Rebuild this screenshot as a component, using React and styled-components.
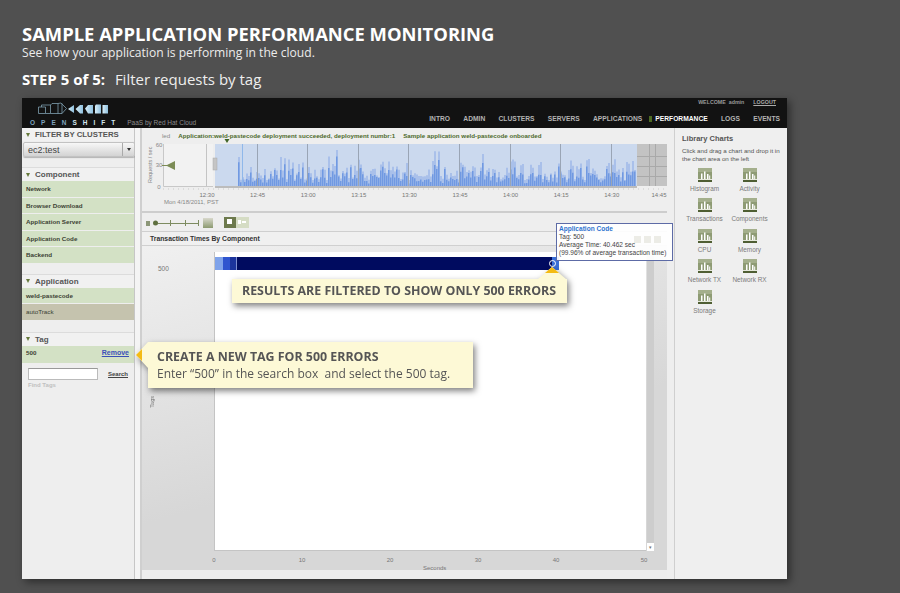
import React from 'react'
import styled, { createGlobalStyle } from 'styled-components'

const GlobalStyle = createGlobalStyle`
    html, body {
        margin:0;
        padding:0;
        background:#505050;
    }
    * {
        box-sizing:border-box;
    }
`

const Page = styled.div`
    width:900px;
    height:593px;
    overflow:hidden;
    padding:22px 0 0 22px;
    background:#505050;
    font-family:"Liberation Sans", Arial, sans-serif;
`

const Title = styled.h1`
    margin:0;
    font:700 18.4px/23px "Open Sans", sans-serif;
    color:#fff;
`

const Subtitle = styled.p`
    margin:0;
    height:17px;
    font:400 12.1px/16px "Open Sans", sans-serif;
    color:#ececec;
`

const Step = styled.h2`
    margin:7px 0 0;
    height:29px;
    font:400 15px/20px "Open Sans", sans-serif;
    color:#eee;
    b {
        font-weight:700;
        color:#fff;
        margin-right:6px;
    }
`

const Window = styled.div`
    position:relative;
    width:765px;
    height:481px;
    display:flex;
    flex-direction:column;
    background:#eee;
    box-shadow:3px 3px 8px rgba(0,0,0,0.45);
`

const TopBar = styled.header`
    height:30px;
    flex:none;
    display:flex;
    justify-content:space-between;
    background:#121212;
`

const Brand = styled.div`
    padding:4px 0 0 8px;
    display:flex;
    flex-direction:column;
    svg {
        display:block;
        margin-left:8px;
    }
`

const BrandRow = styled.div`
    display:flex;
    align-items:flex-end;
    gap:6px;
    margin-top:4px;
`

const Wordmark = styled.span`
    font-size:6.5px;
    font-weight:700;
    letter-spacing:6px;
    color:#7fa3bd;
    line-height:8px;
    em {
        font-style:normal;
        color:#d5e6f0;
    }
`

const Tagline = styled.span`
    font-size:6.5px;
    color:#8d8d8d;
    line-height:8px;
`

const TopRight = styled.div`
    display:flex;
    flex-direction:column;
    align-items:flex-end;
    padding:0 7px 0 0;
`

const Welcome = styled.div`
    display:flex;
    gap:9px;
    padding:0 4px 0 0;
    height:7px;
    margin-bottom:8px;
    align-items:center;
    font-size:5.3px;
    font-weight:700;
    color:#999;
    u {
        color:#aaa;
    }
`

const Nav = styled.nav`
    display:flex;
    align-items:center;
    height:11px;
`

const NavItem = styled.span`
    margin-left:${(p) => p.$gap}px;
    font-size:6.7px;
    font-weight:700;
    color:${(p) => (p.$active ? '#fff' : '#b4b4b4')};
    ${(p) => p.$active && `
        &::before {
            content:"";
            display:inline-block;
            width:3px;
            height:6px;
            margin-right:3px;
            background:#4c6a22;
            vertical-align:-0.5px;
        }
    `}
`

const Body = styled.div`
    flex:1;
    min-height:0;
    display:flex;
`

const Sidebar = styled.aside`
    width:113px;
    flex:none;
    display:flex;
    flex-direction:column;
    background:#eee;
    border-right:1px solid #c6c6c6;
`

const Divider = styled.div`
    width:7px;
    flex:none;
    background:#f4f4f4;
    border-right:2px solid #cfcfcf;
`

const SectionHead = styled.div`
    height:${(p) => p.$height || 14}px;
    margin-top:${(p) => p.$top || 0}px;
    display:flex;
    align-items:center;
    gap:5px;
    padding-left:4px;
    font-size:${(p) => (p.$large ? 8 : 7.8)}px;
    font-weight:700;
    color:#555;
    border-top:${(p) => (p.$line ? '1px solid #dcdcdc' : 'none')};
    background:#f1f1f1;
    &::before {
        content:"";
        border-left:2.5px solid transparent;
        border-right:2.5px solid transparent;
        border-top:4px solid #66793c;
    }
`

const Select = styled.div`
    height:15px;
    margin:1px 0 0 1px;
    width:112px;
    display:flex;
    align-items:center;
    justify-content:space-between;
    font-size:9px;
    color:#444;
    padding-left:4px;
    background:linear-gradient(#f7f7f7,#d3d3d3);
    border:1px solid #c2c2c2;
    border-radius:2px;
    box-shadow:0 1px 1px rgba(0,0,0,0.25);
`

const Caret = styled.span`
    width:12px;
    height:100%;
    display:flex;
    align-items:center;
    justify-content:center;
    border-left:1px solid #aaa;
    &::after {
        content:"";
        border-left:2.5px solid transparent;
        border-right:2.5px solid transparent;
        border-top:3.5px solid #333;
    }
`

const RowList = styled.div`
    display:flex;
    flex-direction:column;
    gap:1px;
`

const Row = styled.div`
    height:15.5px;
    flex:none;
    display:flex;
    align-items:center;
    justify-content:space-between;
    padding:0 5px 0 4px;
    font-size:6.25px;
    font-weight:${(p) => (p.$muted ? 400 : 700)};
    color:#3b3f33;
    background:${(p) => (p.$muted ? '#c5c3ae' : '#d3e1c5')};
`

const TagRow = styled(Row)`
    height:17px;
    padding-bottom:3px;
    a {
        font-size:7px;
        font-weight:700;
        color:#3a4fb8;
        text-decoration:underline;
    }
`

const SearchRow = styled.div`
    margin-top:5px;
    padding:0 6px 0 6px;
    display:flex;
    align-items:center;
    justify-content:space-between;
    font-size:6px;
    font-weight:700;
    color:#444;
`

const SearchBox = styled.div`
    width:70px;
    height:12px;
    background:#fff;
    border:1px solid #bbb;
    border-top-color:#999;
`

const FindTags = styled.div`
    margin:2px 0 0 6px;
    font-size:6px;
    font-weight:700;
    color:#c0c0c0;
`

const Main = styled.main`
    width:525px;
    flex:none;
    display:flex;
    flex-direction:column;
    background:#eee;
`

const Notice = styled.div`
    height:14px;
    flex:none;
    display:flex;
    align-items:center;
    gap:8px;
    padding-left:20px;
    font-size:6.2px;
    font-weight:700;
    color:#4d6a2c;
    white-space:nowrap;
    overflow:hidden;
    span:first-child {
        font-weight:400;
        color:#888;
    }
`

const Overview = styled.div`
    height:71px;
    flex:none;
    border-bottom:2px solid #cdcdcd;
    svg {
        display:block;
        overflow:visible;
    }
`

const Toolbar = styled.div`
    height:19px;
    flex:none;
    display:flex;
    align-items:center;
    padding-left:4px;
    border-bottom:1px solid #cfcfcf;
    svg {
        display:block;
    }
`

const PanelTitle = styled.div`
    height:14px;
    flex:none;
    display:flex;
    align-items:center;
    padding-left:8px;
    font-size:6.8px;
    font-weight:700;
    color:#333;
    background:#f0f0f0;
    border-bottom:1px solid #d0d0d0;
`

const ChartArea = styled.div`
    flex:1;
    min-height:0;
    display:flex;
    flex-direction:column;
    padding-top:6px;
    background:linear-gradient(165deg,#f0f0f0,#d7d7d7 60%);
`

const ChartRow = styled.div`
    display:flex;
    flex:none;
    height:299px;
`

const Gutter = styled.div`
    width:72px;
    flex:none;
    display:flex;
    flex-direction:column;
    font-size:6.5px;
    color:#777;
`

const TagValue = styled.div`
    margin:13px 0 0 16px;
    line-height:8px;
`

const TagAxis = styled.div`
    margin:123px 0 0 6px;
    width:8px;
    writing-mode:vertical-rl;
    transform:rotate(180deg);
    font-size:5.5px;
    line-height:8px;
`

const Plot = styled.div`
    width:432px;
    flex:none;
    padding-top:5px;
    background:#fff;
    border-left:1px solid #c4c4c4;
    border-bottom:1px solid #c4c4c4;
`

const Bar = styled.div`
    width:344px;
    height:13px;
    display:flex;
`

const Segment = styled.div`
    width:${(p) => p.$width}px;
    flex:${(p) => (p.$grow ? 1 : 'none')};
    background:${(p) => p.$color};
`

const EndSegment = styled(Segment)`
    position:relative;
    &::after {
        content:"";
        position:absolute;
        left:-3px;
        top:3px;
        width:5px;
        height:5px;
        border:1px solid #fff;
        border-radius:50%;
    }
`

const Scroller = styled.div`
    width:7px;
    margin-left:1px;
    flex:none;
    display:flex;
    align-items:flex-end;
    background:#cdcdcd;
    &::after {
        content:"▾";
        display:block;
        width:100%;
        height:8px;
        background:#fff;
        color:#777;
        font-size:5px;
        line-height:8px;
        text-align:center;
    }
`

const Axis = styled.div`
    display:flex;
    padding:5px 0 0 72px;
    height:14px;
`

const Tick = styled.div`
    width:${(p) => p.$width}px;
    flex:none;
    font-size:6px;
    line-height:8px;
    color:#777;
    span {
        display:inline-block;
        transform:translateX(-50%);
    }
`

const AxisName = styled.div`
    height:5px;
    overflow:hidden;
    padding-left:281px;
    font-size:6px;
    line-height:7px;
    color:#777;
`

const Footer = styled.div`
    height:9px;
    flex:none;
    background:#ededed;
`

const Library = styled.aside`
    flex:1;
    margin-left:7px;
    padding:6px 0 0 7px;
    background:#efefef;
    border-left:1px solid #cfcfcf;
`

const LibraryTitle = styled.h3`
    margin:0;
    font-size:7.5px;
    line-height:9px;
    font-weight:700;
    color:#555;
`

const LibraryText = styled.p`
    margin:4px 0 0;
    font-size:6.2px;
    line-height:8px;
    color:#555;
    white-space:nowrap;
`

const IconGrid = styled.div`
    display:grid;
    grid-template-columns:45px 45px;
    grid-auto-rows:30.4px;
    margin-top:5px;
`

const ChartButton = styled.div`
    display:flex;
    flex-direction:column;
    align-items:center;
    gap:3px;
    font-size:6.4px;
    line-height:7px;
    color:#7b7b7b;
    white-space:nowrap;
    svg {
        display:block;
        flex:none;
    }
`

const Tooltip = styled.div`
    position:absolute;
    left:534px;
    top:125px;
    width:117px;
    height:38px;
    padding:1px 0 0 2px;
    background:rgba(255,255,255,0.92);
    border:1px solid #5d6ba6;
    font-size:6.55px;
    line-height:8px;
    color:#444;
    white-space:nowrap;
    b {
        display:block;
        color:#2f74d0;
    }
`

const WindowButtons = styled.div`
    position:absolute;
    right:11px;
    top:12px;
    display:flex;
    gap:3px;
`

const WindowButton = styled.span`
    width:7px;
    height:7px;
    background:#ecece6;
`

const Callout = styled.div`
    position:absolute;
    background:#fdf9d6;
    filter:drop-shadow(2px 3px 3px rgba(0,0,0,0.5));
    font-family:"Open Sans", sans-serif;
    color:#555;
    white-space:nowrap;
    &::before, &::after {
        content:"";
        position:absolute;
    }
`

const ResultCallout = styled(Callout)`
    left:210px;
    top:181px;
    width:335px;
    height:24px;
    padding-left:10px;
    font-size:12.4px;
    line-height:24px;
    font-weight:700;
    &::before {
        left:306px;
        top:-12px;
        width:28px;
        height:12px;
        background:#fdf9d6;
        clip-path:polygon(50% 0,100% 100%,0 100%);
    }
    &::after {
        left:313px;
        top:-12px;
        width:14px;
        height:6px;
        background:#f4bb14;
        clip-path:polygon(50% 0,100% 100%,0 100%);
    }
`

const TagCallout = styled(Callout)`
    left:126px;
    top:244px;
    width:325px;
    height:46px;
    padding:6px 0 0 9px;
    font-size:12px;
    line-height:17px;
    b {
        display:block;
        font-size:12.4px;
    }
    &::before {
        left:-12px;
        top:0;
        width:12px;
        height:26px;
        background:#fdf9d6;
        clip-path:polygon(100% 0,100% 100%,0 50%);
    }
    &::after {
        left:-12px;
        top:7px;
        width:6px;
        height:12px;
        background:#f4bb14;
        clip-path:polygon(100% 0,100% 100%,0 50%);
    }
`

// deterministic noise so the overview chart stays the same on every load
const noise = (i) => {
    const x = Math.sin(i * 12.9898) * 43758.5453
    return x - Math.floor(x)
}

const OverviewChart = () => {
    const labels = ['12:30', '12:45', '13:00', '13:15', '13:30', '13:45', '14:00', '14:15', '14:30']
    const light = []
    const dark = []
    for (let x = 96; x < 494; x += 2) {
        const wave = 0.6 + 0.4 * Math.sin(x / 17) * Math.sin(x / 5.3)
        const a = 6 + Math.pow(noise(x), 1.5) * 34 * wave
        const b = a * (0.4 + noise(x + 500) * 0.5)
        light.push(`M${x} 44V${(44 - Math.min(a, 36)).toFixed(1)}h2V44z`)
        dark.push(`M${x} 44V${(44 - Math.min(b, 30)).toFixed(1)}h1.5V44z`)
    }
    return (
        <svg width="525" height="69" viewBox="0 0 525 69">
            <rect x="21" y="2" width="50" height="42" fill="#f2f2f2" />
            <path d="M21.5 2V44.5H71" fill="none" stroke="#c8c8c8" />
            <path d="M64.5 2V44" stroke="#c4c4c4" strokeWidth="1" />
            <rect x="73" y="2" width="422" height="42" fill="#cbd9ee" />
            <path d={light.join('')} fill="#a9c0ea" />
            <path d={dark.join('')} fill="#7099e2" />
            <path d="M100.5 2V44" stroke="#8fb8ea" />
            {[115, 165, 216, 266, 317, 368, 418, 469].map((x) => (
                <path key={x} d={`M${x}.5 2V44`} stroke="#9aa5b5" />
            ))}
            <rect x="495" y="2" width="30" height="42" fill="#c3c3c3" />
            <path d="M495 14.5H525M495 24.5H525M495 34.5H525M507.5 2V44M513.5 2V44" stroke="#a9a9a9" />
            <path d="M73 45H495" stroke="#bcbcbc" strokeWidth="2" />
            <rect x="71" y="16" width="4" height="12" fill="#c5c5c5" stroke="#aaa" strokeWidth="0.5" />
            <path d="M20 23.5H26" stroke="#7c8c56" />
            <path d="M24 23.5L33 19V28Z" fill="#7c8c56" />
            <path d="M82.5 -3H87.5L85 1Z" fill="#3f6426" />
            <path d="M21 47H525" stroke="#c8c8c8" strokeDasharray="1 4" />
            <g fontFamily="Liberation Sans, sans-serif" fontSize="6" fill="#888">
                <text x="17" y="5" textAnchor="middle">60</text>
                <text x="17" y="25" textAnchor="middle">30</text>
                <text x="17" y="47" textAnchor="middle">0</text>
                <text transform="translate(10 41) rotate(-90)" fontSize="5.5">Requests / sec</text>
                {labels.map((t, i) => (
                    <text key={t} x={65 + i * 50.6} y="55" textAnchor="middle" fill="#777">{t}</text>
                ))}
                <text x="517" y="55" textAnchor="middle" fill="#777">14:45</text>
                <text x="22" y="62">Mon 4/18/2011, PST</text>
            </g>
        </svg>
    )
}

const ZoomControls = () => (
    <svg width="110" height="14" viewBox="0 0 110 14">
        <rect x="0" y="6" width="4" height="5" fill="#8b9677" />
        <circle cx="9.5" cy="8" r="2.5" fill="#5f7040" />
        <path d="M12 8.5H53M24.5 5V11M39.5 5V11M52.5 5V11" stroke="#7d8b60" />
        <defs>
            <linearGradient id="btn" x1="0" y1="0" x2="0" y2="1">
                <stop offset="0" stopColor="#d8d8cc" />
                <stop offset="1" stopColor="#8c9a70" />
            </linearGradient>
        </defs>
        <rect x="57" y="3" width="10" height="10" fill="url(#btn)" />
        <rect x="78" y="2" width="12" height="11" fill="#6d7a4d" />
        <rect x="81" y="4" width="5" height="5" fill="#fff" />
        <rect x="90" y="2" width="13" height="11" fill="#d5dcc4" />
        <rect x="92" y="5" width="3" height="4" fill="#fff" />
        <rect x="96" y="6" width="4" height="2" fill="#fff" />
    </svg>
)

const LogoMark = () => (
    <svg width="72" height="13" viewBox="0 0 72 13">
        <defs>
            <linearGradient id="logo" x1="0" y1="0" x2="1" y2="0">
                <stop offset="0" stopColor="#d8eef8" />
                <stop offset="1" stopColor="#8fc0de" />
            </linearGradient>
        </defs>
        <g fill="none" stroke="#7f9fb0" strokeWidth="0.8">
            <path d="M0.5 5H7.5V11.5H0.5Z" />
            <path d="M3.5 5V3H12.5V11.5H7.5" />
            <path d="M12.5 3L14 1.5H20V11.5H12.5" />
            <path d="M20 1.5L23 1L28.5 6.5L24 11.5H20" />
            <path d="M24 1.5V11.5" />
        </g>
        <g fill="url(#logo)">
            <path d="M30 7L36 3V11Z" />
            <path d="M37.5 7L42 3H45V11.5H42Z" />
            <path d="M47 6.5L50 3H55V11.5H50Z" />
            <path d="M57 3.5L58 2.5H63V11.5H57Z" />
            <path d="M64.5 3H70V11.5H64.5Z" />
        </g>
    </svg>
)

const ChartIcon = () => (
    <svg width="14" height="14" viewBox="0 0 14 14">
        <rect width="14" height="14" fill="#8e9b74" />
        <rect y="0" width="14" height="4" fill="#a4af8c" />
        <path d="M3 5.5h1.5V11H3zM6 3.5h1.5V11H6zM9 6h1.5v5H9zM11.2 7.5h1V11h-1z" fill="#fff" />
        <rect y="11" width="14" height="1" fill="#e6e9dc" />
        <rect y="12" width="14" height="2" fill="#4f5e33" />
    </svg>
)

const chartTypes = ['Histogram', 'Activity', 'Transactions', 'Components', 'CPU', 'Memory', 'Network TX', 'Network RX', 'Storage']

export default function App() {
    return (
        <Page>
            <GlobalStyle />
            <Title>SAMPLE APPLICATION PERFORMANCE MONITORING</Title>
            <Subtitle>See how your application is performing in the cloud.</Subtitle>
            <Step><b>STEP 5 of 5:</b> Filter requests by tag</Step>

            <Window>
                <TopBar>
                    <Brand>
                        <LogoMark />
                        <BrandRow>
                            <Wordmark>OPEN<em>SHIFT</em></Wordmark>
                            <Tagline>PaaS by Red Hat Cloud</Tagline>
                        </BrandRow>
                    </Brand>
                    <TopRight>
                        <Welcome>
                            <span>WELCOME&nbsp; admin</span>
                            <u>LOGOUT</u>
                        </Welcome>
                        <Nav>
                            <NavItem $gap={0}>INTRO</NavItem>
                            <NavItem $gap={13.3}>ADMIN</NavItem>
                            <NavItem $gap={13.3}>CLUSTERS</NavItem>
                            <NavItem $gap={13.3}>SERVERS</NavItem>
                            <NavItem $gap={13.3}>APPLICATIONS</NavItem>
                            <NavItem $gap={7} $active>PERFORMANCE</NavItem>
                            <NavItem $gap={13.3}>LOGS</NavItem>
                            <NavItem $gap={13.3}>EVENTS</NavItem>
                        </Nav>
                    </TopRight>
                </TopBar>

                <Body>
                    <Sidebar>
                        <SectionHead $height={13}>FILTER BY CLUSTERS</SectionHead>
                        <Select>ec2:test<Caret /></Select>
                        <SectionHead $large $top={10} $line>Component</SectionHead>
                        <RowList>
                            <Row>Network</Row>
                            <Row>Browser Download</Row>
                            <Row>Application Server</Row>
                            <Row>Application Code</Row>
                            <Row>Backend</Row>
                        </RowList>
                        <SectionHead $large $top={11} $line>Application</SectionHead>
                        <RowList>
                            <Row>weld-pastecode</Row>
                            <Row $muted>autoTrack</Row>
                        </RowList>
                        <SectionHead $large $top={12} $line>Tag</SectionHead>
                        <TagRow>500<a>Remove</a></TagRow>
                        <SearchRow>
                            <SearchBox />
                            <u>Search</u>
                        </SearchRow>
                        <FindTags>Find Tags</FindTags>
                    </Sidebar>
                    <Divider />

                    <Main>
                        <Notice>
                            <span>led</span>
                            <span>Application:weld-pastecode deployment succeeded, deployment numbr:1</span>
                            <span>Sample application weld-pastecode onboarded</span>
                        </Notice>
                        <Overview><OverviewChart /></Overview>
                        <Toolbar><ZoomControls /></Toolbar>
                        <PanelTitle>Transaction Times By Component</PanelTitle>
                        <ChartArea>
                            <ChartRow>
                                <Gutter>
                                    <TagValue>500</TagValue>
                                    <TagAxis>Tags</TagAxis>
                                </Gutter>
                                <Plot>
                                    <Bar>
                                        <Segment $width={8} $color="#7fa3ea" />
                                        <Segment $width={7} $color="#2f55cf" />
                                        <Segment $width={6} $color="#1c349c" />
                                        <Segment $width={1} $color="#7f8fd0" />
                                        <Segment $grow $color="#000b5f" />
                                        <EndSegment $width={7} $color="#3a6fd8" />
                                    </Bar>
                                </Plot>
                                <Scroller />
                            </ChartRow>
                            <Axis>
                                <Tick $width={88}><span>0</span></Tick>
                                <Tick $width={88}><span>10</span></Tick>
                                <Tick $width={88}><span>20</span></Tick>
                                <Tick $width={78}><span>30</span></Tick>
                                <Tick $width={88}><span>40</span></Tick>
                                <Tick $width={10}><span>50</span></Tick>
                            </Axis>
                            <AxisName>Seconds</AxisName>
                        </ChartArea>
                        <Footer />
                    </Main>

                    <Library>
                        <LibraryTitle>Library Charts</LibraryTitle>
                        <LibraryText>Click and drag a chart and drop it in<br />the chart area on the left</LibraryText>
                        <IconGrid>
                            {chartTypes.map((name) => (
                                <ChartButton key={name}>
                                    <ChartIcon />
                                    {name}
                                </ChartButton>
                            ))}
                        </IconGrid>
                    </Library>
                </Body>

                <Tooltip>
                    <b>Application Code</b>
                    Tag: 500<br />
                    Average Time: 40.462 sec<br />
                    (99.96% of average transaction time)
                    <WindowButtons>
                        <WindowButton />
                        <WindowButton />
                        <WindowButton />
                    </WindowButtons>
                </Tooltip>

                <ResultCallout>RESULTS ARE FILTERED TO SHOW ONLY 500 ERRORS</ResultCallout>
                <TagCallout>
                    <b>CREATE A NEW TAG FOR 500 ERRORS</b>
                    Enter “500” in the search box&nbsp; and select the 500 tag.
                </TagCallout>
            </Window>
        </Page>
    )
}
